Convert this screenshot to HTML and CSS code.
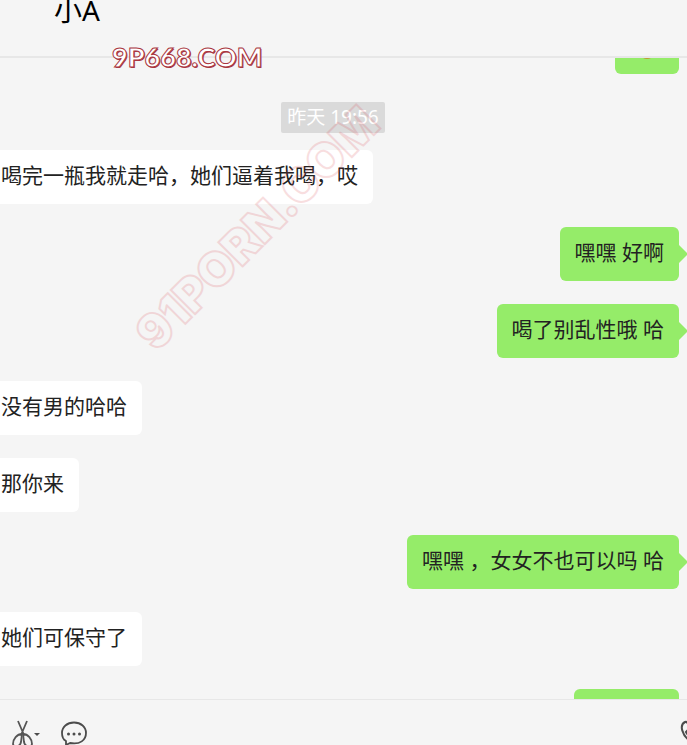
FILE: index.html
```html
<!DOCTYPE html>
<html lang="zh-CN">
<head>
    <meta charset="UTF-8">
    <meta name="viewport" content="width=device-width, initial-scale=1.0">
    <title>小A</title>
    <link rel="stylesheet" href="styles.css">
</head>
<body>
    <header class="chat-header">
        <h1>小A</h1>
        <span class="site-mark">9P668.COM</span>
    </header>

    <main class="chat">
        <div class="message sent emoji">
            <svg width="34" height="34" viewBox="0 0 34 34" aria-hidden="true">
                <ellipse cx="17" cy="17" rx="10" ry="13" fill="#c09a35"/>
            </svg>
        </div>
        <time class="time">昨天 19:56</time>
        <div class="message received">喝完一瓶我就走哈，她们逼着我喝，哎</div>
        <div class="message sent">嘿嘿 好啊</div>
        <div class="message sent">喝了别乱性哦 哈</div>
        <div class="message received">没有男的哈哈</div>
        <div class="message received">那你来</div>
        <div class="message sent">嘿嘿 ，女女不也可以吗 哈</div>
        <div class="message received">她们可保守了</div>
        <div class="message sent next"></div>
        <span class="watermark">91PORN.COM</span>
    </main>

    <footer class="toolbar">
        <button type="button" class="cut" aria-label="截图">
            <svg width="30" height="32" viewBox="0 0 30 32">
                <g fill="none" stroke="#555" stroke-width="1.800">
                    <path d="M6 1 12 15M15 1 9 15"/>
                    <path d="M10 14C5 14 1 19 1 24c1 4 7 3 8-2z"/>
                    <path d="M11 14c5 0 9 5 9 10-1 4-7 3-8-2z"/>
                </g>
                <path d="M22 13h6l-3 3z" fill="#4c4c4c"/>
            </svg>
        </button>
        <button type="button" class="history" aria-label="聊天记录">
            <svg width="28" height="28" viewBox="0 0 28 28">
                <path d="M14 2.500C7 2.500 2 7 2 13c0 4 2 7 4 8v4l4-2c10 2 16-3 16-10 0-6-5-10.500-12-10.500z" fill="none" stroke="#4c4c4c" stroke-width="1.800" stroke-linejoin="round"/>
                <g fill="#4c4c4c">
                    <circle cx="8.500" cy="14" r="1.500"/>
                    <circle cx="14" cy="14" r="1.500"/>
                    <circle cx="19.500" cy="14" r="1.500"/>
                </g>
            </svg>
        </button>
        <button type="button" class="call" aria-label="语音通话">
            <svg width="28" height="28" viewBox="0 0 28 28">
                <path d="M5 2c3-1 4 4 4 7l-3 3c2 4 5 6 9 8l3-3c4 1 8 3 7 6-3 5-9 3-15-2C2 15-1 5 5 2z" fill="none" stroke="#4c4c4c" stroke-width="2"/>
            </svg>
        </button>
    </footer>
</body>
</html>
```

FILE: styles.css
```css
* {
    box-sizing: border-box;
}
body {
    display: flex;
    flex-direction: column;
    height: 100vh;
    margin: 0;
    overflow: hidden;
    background-color: #f5f5f5;
    color: #222;
    font-family: "Noto Sans", "Noto Sans CJK SC", sans-serif;
}
.chat-header {
    position: relative;
    flex: none;
    height: 58px;
    padding-left: 54px;
    border-bottom: 2px solid #e7e7e7;
    z-index: 1;
}
.chat-header h1 {
    margin: 0;
    color: #000;
    font-size: 28px;
    font-weight: 400;
    line-height: 20px;
}
.site-mark,
.watermark {
    position: absolute;
    font-weight: 900;
    white-space: nowrap;
    pointer-events: none;
}
.site-mark {
    left: 112px;
    top: 40px;
    color: #fff;
    font-family: Lato, sans-serif;
    font-size: 27px;
    line-height: 34px;
    -webkit-text-stroke: 1px #a93640;
    text-shadow: 1px 1px #a93640;
}
.chat {
    position: relative;
    display: flex;
    flex: 1;
    flex-direction: column;
    gap: 23px;
    min-height: 0;
    overflow: hidden;
}
.message {
    position: relative;
    flex: none;
    height: 54px;
    padding: 0 15px;
    border-radius: 6px;
    font-size: 21px;
    line-height: 50px;
    white-space: nowrap;
}
.received {
    align-self: flex-start;
    padding-left: 1px;
    border-radius: 0 6px 6px 0;
    background-color: #fff;
}
.sent {
    align-self: flex-end;
    margin-right: 8px;
    background-color: #95ec69;
}
/* tail of the bubble */
.sent::after {
    content: "";
    position: absolute;
    top: 18px;
    left: 100%;
    border: 9px solid transparent;
    border-right: 0;
    border-left-color: #95ec69;
}
/* scrolled halfway out of the list */
.emoji {
    margin-top: -38px;
    padding-top: 9px;
    line-height: 0;
}
.emoji::after,
.next::after {
    display: none;
}
.next {
    width: 105px;
}
.time {
    flex: none;
    align-self: center;
    margin: 5px 21px -6px 0;
    padding: 0 6px;
    border-radius: 2px;
    background-color: #dadada;
    color: #fff;
    font-size: 19px;
    line-height: 31px;
}
.watermark {
    left: 257px;
    top: 170px;
    color: transparent;
    font-family: Inter, sans-serif;
    font-size: 47px;
    line-height: 60px;
    opacity: 0.17;
    transform: translate(-50%, -50%) rotate(-45deg);
    -webkit-text-stroke: 2px #d8404a;
}
.toolbar {
    display: flex;
    flex: none;
    height: 46px;
    padding: 20px 0 0 12px;
    border-top: 1px solid #e7e7e7;
    overflow: hidden;
}
.toolbar button {
    flex: none;
    padding: 0;
    border: none;
    background: none;
    line-height: 0;
    cursor: pointer;
}
.history {
    margin-left: 18px;
}
.toolbar .call {
    margin: 0 -21px 0 auto;
}
```
